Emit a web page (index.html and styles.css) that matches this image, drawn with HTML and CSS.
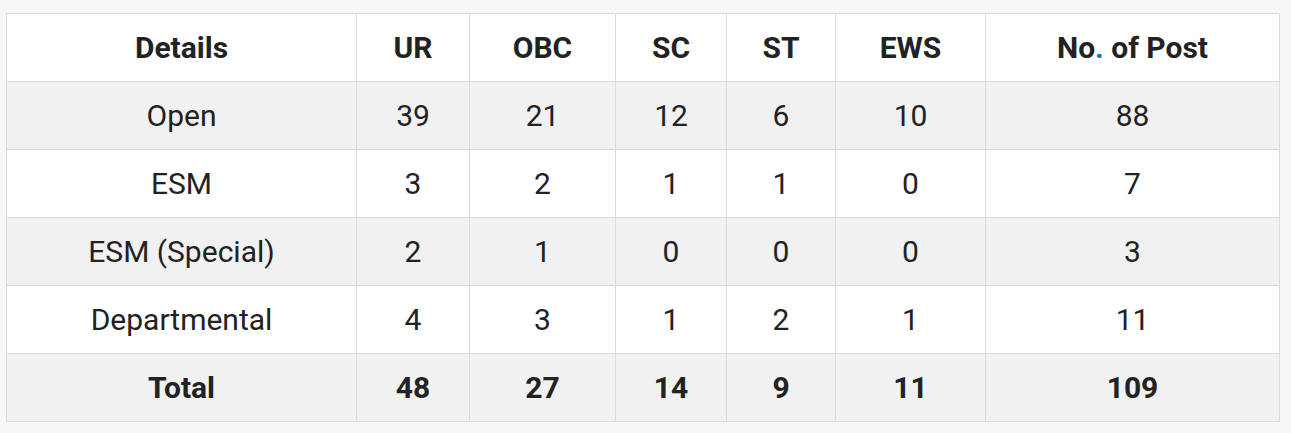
FILE: index.html
```html
<!DOCTYPE html>
<html>
<head>
<meta charset="utf-8">
<link rel="stylesheet" href="styles.css">
</head>
<body>
<div class="wrap">
<table class="posts">
<colgroup>
<col class="c1"><col class="c2"><col class="c3"><col class="c4"><col class="c5"><col class="c6"><col class="c7">
</colgroup>
<thead>
<tr><th>Details</th><th>UR</th><th>OBC</th><th>SC</th><th>ST</th><th>EWS</th><th>No<span class="dot">.</span> of Post</th></tr>
</thead>
<tbody>
<tr><td>Open</td><td>39</td><td>21</td><td>12</td><td>6</td><td>10</td><td>88</td></tr>
<tr><td>ESM</td><td>3</td><td>2</td><td>1</td><td>1</td><td>0</td><td>7</td></tr>
<tr><td>ESM (Special)</td><td>2</td><td>1</td><td>0</td><td>0</td><td>0</td><td>3</td></tr>
<tr><td>Departmental</td><td>4</td><td>3</td><td>1</td><td>2</td><td>1</td><td>11</td></tr>
<tr class="total"><td>Total</td><td>48</td><td>27</td><td>14</td><td>9</td><td>11</td><td>109</td></tr>
</tbody>
</table>
</div>
</body>
</html>
```

FILE: styles.css
```css
html, body {
  margin: 0;
  padding: 0;
  background: #f6f7f9;
}
.wrap {
  padding: 13px 0 0 6px;
}
.posts {
  border-collapse: collapse;
  table-layout: fixed;
  width: 1273px;
  font-family: Roboto, "Liberation Sans", sans-serif;
  font-size: 30px;
  line-height: 1.2;
  color: #222;
  background: #fff;
}
.c1 { width: 350px; }
.c2 { width: 113px; }
.c3 { width: 146px; }
.c4 { width: 111px; }
.c5 { width: 109px; }
.c6 { width: 150px; }
.c7 { width: 294px; }
.posts th, .posts td {
  border: 1px solid #dcdcdc;
  height: 67px;
  padding: 0;
  text-align: center;
  vertical-align: middle;
}
.posts th {
  font-weight: 700;
}
.posts tbody tr:nth-child(odd) td {
  background: #f1f1f1;
}
.posts .total td {
  font-weight: 700;
}
.dot { color: #1e73be; }
```
